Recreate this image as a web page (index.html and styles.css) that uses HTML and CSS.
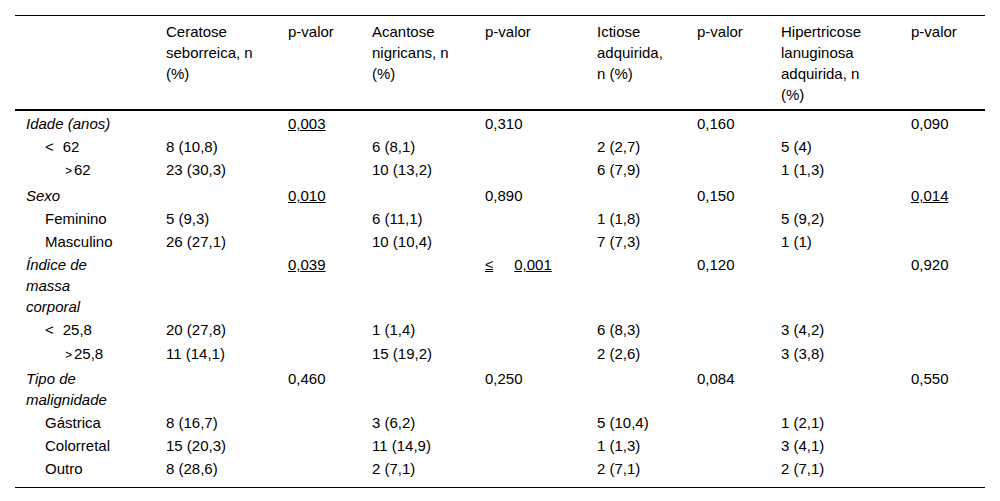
FILE: index.html
```html
<!DOCTYPE html>
<html lang="pt">
<head>
<meta charset="utf-8">
<title>Tabela</title>
<link rel="stylesheet" href="styles.css">
</head>
<body>
<table class="data">
  <colgroup>
    <col class="c-label">
    <col class="c-ceratose">
    <col class="c-p">
    <col class="c-acantose">
    <col class="c-p2">
    <col class="c-ictiose">
    <col class="c-p">
    <col class="c-hiper">
    <col class="c-p">
  </colgroup>
  <thead>
    <tr>
      <th></th>
      <th>Ceratose<br>seborreica, n<br>(%)</th>
      <th>p-valor</th>
      <th>Acantose<br>nigricans, n<br>(%)</th>
      <th>p-valor</th>
      <th>Ictiose<br>adquirida,<br>n (%)</th>
      <th>p-valor</th>
      <th>Hipertricose<br>lanuginosa<br>adquirida, n<br>(%)</th>
      <th>p-valor</th>
    </tr>
  </thead>
  <tbody>
    <tr class="group first">
      <td class="label">Idade (anos)</td><td></td><td><span class="sig">0,003</span></td><td></td><td>0,310</td><td></td><td>0,160</td><td></td><td>0,090</td>
    </tr>
    <tr>
      <td class="sub"><span class="lt">&lt;</span>62</td><td>8 (10,8)</td><td></td><td>6 (8,1)</td><td></td><td>2 (2,7)</td><td></td><td>5 (4)</td><td></td>
    </tr>
    <tr>
      <td class="sub"><span class="gt">&gt;</span>62</td><td>23 (30,3)</td><td></td><td>10 (13,2)</td><td></td><td>6 (7,9)</td><td></td><td>1 (1,3)</td><td></td>
    </tr>
    <tr class="group">
      <td class="label">Sexo</td><td></td><td><span class="sig">0,010</span></td><td></td><td>0,890</td><td></td><td>0,150</td><td></td><td><span class="sig">0,014</span></td>
    </tr>
    <tr>
      <td class="sub">Feminino</td><td>5 (9,3)</td><td></td><td>6 (11,1)</td><td></td><td>1 (1,8)</td><td></td><td>5 (9,2)</td><td></td>
    </tr>
    <tr>
      <td class="sub">Masculino</td><td>26 (27,1)</td><td></td><td>10 (10,4)</td><td></td><td>7 (7,3)</td><td></td><td>1 (1)</td><td></td>
    </tr>
    <tr class="group">
      <td class="label">Índice de<br>massa<br>corporal</td><td></td><td><span class="sig">0,039</span></td><td></td><td><span class="sig le">≤</span><span class="sig">0,001</span></td><td></td><td>0,120</td><td></td><td>0,920</td>
    </tr>
    <tr>
      <td class="sub"><span class="lt">&lt;</span>25,8</td><td>20 (27,8)</td><td></td><td>1 (1,4)</td><td></td><td>6 (8,3)</td><td></td><td>3 (4,2)</td><td></td>
    </tr>
    <tr>
      <td class="sub"><span class="gt">&gt;</span>25,8</td><td>11 (14,1)</td><td></td><td>15 (19,2)</td><td></td><td>2 (2,6)</td><td></td><td>3 (3,8)</td><td></td>
    </tr>
    <tr class="group">
      <td class="label">Tipo de<br>malignidade</td><td></td><td>0,460</td><td></td><td>0,250</td><td></td><td>0,084</td><td></td><td>0,550</td>
    </tr>
    <tr>
      <td class="sub">Gástrica</td><td>8 (16,7)</td><td></td><td>3 (6,2)</td><td></td><td>5 (10,4)</td><td></td><td>1 (2,1)</td><td></td>
    </tr>
    <tr>
      <td class="sub">Colorretal</td><td>15 (20,3)</td><td></td><td>11 (14,9)</td><td></td><td>1 (1,3)</td><td></td><td>3 (4,1)</td><td></td>
    </tr>
    <tr class="last">
      <td class="sub">Outro</td><td>8 (28,6)</td><td></td><td>2 (7,1)</td><td></td><td>2 (7,1)</td><td></td><td>2 (7,1)</td><td></td>
    </tr>
  </tbody>
</table>
</body>
</html>
```
FILE: styles.css
```css
html, body {
  margin: 0;
  padding: 0;
  background: #fff;
}

body {
  font-family: "Liberation Sans", Arial, sans-serif;
  font-size: 15px;
  line-height: 21px;
  color: #000;
}

.data {
  margin: 15px 0 0 15px;
  width: 970px;
  border-collapse: collapse;
  table-layout: fixed;
}

.c-label { width: 141px; }
.c-ceratose { width: 122px; }
.c-p { width: 84px; }
.c-acantose { width: 113px; }
.c-p2 { width: 112px; }
.c-ictiose { width: 100px; }
.c-hiper { width: 130px; }

.data th {
  font-weight: normal;
  text-align: left;
  vertical-align: top;
  padding: 5px 10px 4px;
  border-top: 1px solid #000;
  border-bottom: 2px solid #000;
}

.data td {
  vertical-align: top;
  text-align: left;
  padding: 1.1px 10px;
  white-space: nowrap;
}

.data tr.first td {
  padding-top: 2px;
}

.data tr.last td {
  padding-bottom: 8px;
  border-bottom: 1px solid #000;
}

.data td.label {
  font-style: italic;
  padding-left: 11px;
}

.data td.sub {
  padding-left: 30px;
}

.sig {
  text-decoration: underline;
}

.le {
  margin-right: 21px;
}

.lt {
  margin-right: 9px;
}

.gt {
  display: inline-block;
  margin-left: 20px;
  margin-right: 2px;
  font-size: 12px;
}
```
